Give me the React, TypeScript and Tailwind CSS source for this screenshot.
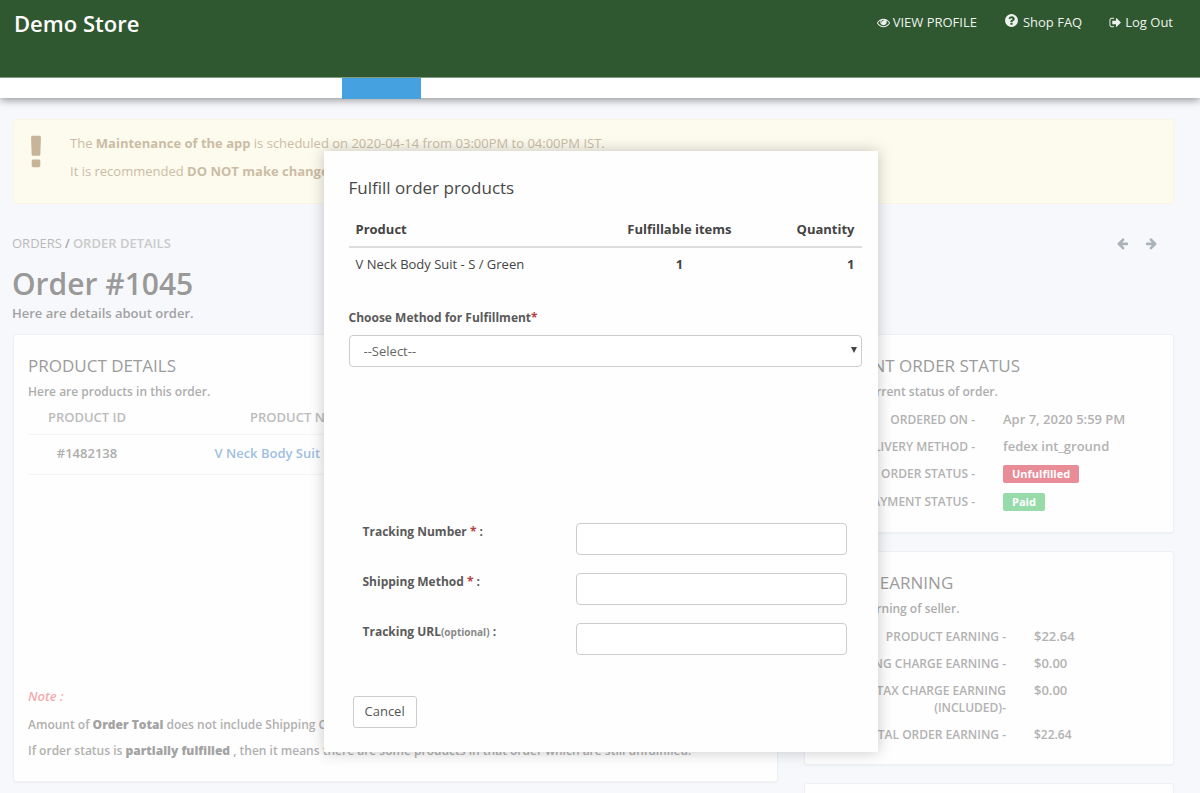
import type { ReactNode } from "react";

type IconProps = { path: string; className: string };

const ICONS = {
  eye: "M1664 960q-152-236-381-353 61 104 61 225 0 185-131.5 316.5t-316.5 131.5-316.5-131.5-131.5-316.5q0-121 61-225-229 117-381 353 133 205 333.5 326.5t434.5 121.5 434.5-121.5 333.5-326.5zm-720-384q0-20-14-34t-34-14q-125 0-214.5 89.5t-89.5 214.5q0 20 14 34t34 14 34-14 14-34q0-86 61-147t147-61q20 0 34-14t14-34zm848 384q0 34-20 69-140 230-376.5 368.5t-499.5 138.5-499.5-139-376.5-368q-20-35-20-69t20-69q140-229 376.5-368t499.5-139 499.5 139 376.5 368q20 35 20 69z",
  question:
    "M1024 1376v-192q0-14-9-23t-23-9h-192q-14 0-23 9t-9 23v192q0 14 9 23t23 9h192q14 0 23-9t9-23zm256-672q0-88-55.5-163t-138.5-116-170-41q-243 0-371 213-15 24 8 42l132 100q7 6 19 6 16 0 25-12 53-68 86-92 34-24 86-24 48 0 85.5 26t37.5 59q0 38-20 61t-68 45q-63 28-115.500 86.500t-52.500 125.500v36q0 14 9 23t23 9h192q14 0 23-9t9-23q0-19 21.500-49.500t54.500-49.500q32-18 49-28.500t46-35 44.500-48 28-60.500 12.500-81zm384 192q0 209-103 385.500t-279.500 279.500-385.500 103-385.500-103-279.500-279.500-103-385.500 103-385.500 279.500-279.500 385.500-103 385.500 103 279.500 279.500 103 385.500z",
  signOut:
    "M704 1440q0 4 1 20t.5 26.5-3 23.5-10 19.5-20.5 6.5h-320q-119 0-203.5-84.5t-84.5-203.5v-704q0-119 84.5-203.5t203.5-84.5h320q13 0 22.5 9.5t9.5 22.5q0 4 1 20t.5 26.5-3 23.5-10 19.5-20.5 6.5h-320q-66 0-113 47t-47 113v704q0 66 47 113t113 47h312l11.5 1 11.5 3 8 5.5 7 9 2 13.5zm928-544q0 26-19 45l-544 544q-19 19-45 19t-45-19-19-45v-288h-448q-26 0-45-19t-19-45v-384q0-26 19-45t45-19h448v-288q0-26 19-45t45-19 45 19l544 544q19 19 19 45z",
  exclamation:
    "M1088 1248v224q0 26-19 45t-45 19h-256q-26 0-45-19t-19-45v-224q0-26 19-45t45-19h256q26 0 45 19t19 45zm30-1056l-28 768q-1 26-20.500 45t-45.500 19h-256q-26 0-45.500-19t-20.500-45l-28-768q-1-26 17.500-45t44.500-19h320q26 0 44.500 19t17.500 45z",
  arrowLeft:
    "M1664 896v128q0 53-32.5 90.500t-84.500 37.500h-704l293 294q38 36 38 90t-38 90l-75 76q-37 37-90 37-52 0-91-37l-651-652q-37-37-37-90 0-52 37-91l651-650q38-38 91-38 52 0 90 38l75 74q38 38 38 91t-38 91l-293 293h704q52 0 84.500 37.500t32.500 90.500z",
};

function Icon({ path, className }: IconProps) {
  return (
    <svg viewBox="0 0 1792 1792" fill="currentColor" aria-hidden="true" className={className}>
      <path d={path} />
    </svg>
  );
}

function Card({ title, subtitle, children }: { title: string; subtitle: string; children: ReactNode }) {
  return (
    <section className="rounded-[3px] border border-[#eff0f3] bg-[#fefefe] px-[14px] pt-[19px] pb-[17px] shadow-[0_1px_2px_rgba(0,0,0,0.04)]">
      <h2 className="text-[17px] leading-6 text-[#9c9c9c]">{title}</h2>
      <p className="mt-1 text-[12px] leading-5 font-semibold text-[#adadad]">{subtitle}</p>
      {children}
    </section>
  );
}

type Row = { label: ReactNode; value: ReactNode };

function DetailRows({ rows, columns }: { rows: Row[]; columns: string }) {
  return (
    <dl className="mt-[9px] mb-1 flex flex-col gap-[10px]">
      {rows.map((row, i) => (
        <div key={i} className={columns}>
          <dt className="text-right text-[12px] leading-[17px] font-semibold text-[#b2b2b2]">{row.label}</dt>
          <dd className="text-[13px] leading-[17px] font-semibold text-[#b2b2b2]">{row.value}</dd>
        </div>
      ))}
    </dl>
  );
}

const statusRows: Row[] = [
  { label: "ORDERED ON -", value: "Apr 7, 2020 5:59 PM" },
  { label: "DELIVERY METHOD -", value: "fedex int_ground" },
  {
    label: "ORDER STATUS -",
    value: (
      <span className="inline-block rounded-[2px] bg-[#e88c98] px-[9px] text-[11px] leading-[18px] font-bold text-white">
        Unfulfilled
      </span>
    ),
  },
  {
    label: "PAYMENT STATUS -",
    value: (
      <span className="inline-block rounded-[2px] bg-[#97dbab] px-[9px] text-[11px] leading-[18px] font-bold text-white">
        Paid
      </span>
    ),
  },
];

const earningRows: Row[] = [
  { label: "PRODUCT EARNING -", value: "$22.64" },
  { label: "SHIPPING CHARGE EARNING -", value: "$0.00" },
  { label: "TAX CHARGE EARNING (INCLUDED)-", value: "$0.00" },
  { label: "TOTAL ORDER EARNING -", value: <span className="text-[12px]">$22.64</span> },
];

function Field({ id, children }: { id: string; children: ReactNode }) {
  return (
    <div className="grid grid-cols-[213px_1fr] items-start">
      <label htmlFor={id} className="text-[12px] leading-[18px] font-bold text-[#5a5a5a]">
        {children}
      </label>
      <input
        id={id}
        type="text"
        className="h-8 w-full rounded-[4px] border border-[#ccc] bg-white px-3 text-[13px] text-[#555]"
      />
    </div>
  );
}

function FulfillDialog() {
  return (
    <div
      role="dialog"
      aria-labelledby="fulfill-title"
      className="w-[554px] bg-[#fefefe] pt-[25px] pr-4 pb-6 pl-[25px] shadow-[0_0_14px_rgba(0,0,0,0.22)]"
    >
      <h2 id="fulfill-title" className="text-[17px] leading-6 text-[#484848]">
        Fulfill order products
      </h2>
      <table className="mt-3 w-full text-[13px] leading-[18px] text-[#444]">
        <thead>
          <tr className="border-b-2 border-[#ddd]">
            <th className="w-[45%] px-[7px] py-2 text-left font-bold">Product</th>
            <th className="px-[7px] py-2 text-center font-bold">Fulfillable items</th>
            <th className="w-[16%] px-[7px] py-2 text-right font-bold">Quantity</th>
          </tr>
        </thead>
        <tbody>
          <tr>
            <td className="px-[7px] pt-[7px] pb-2">V Neck Body Suit - S / Green</td>
            <td className="px-[7px] pt-[7px] pb-2 text-center font-bold">1</td>
            <td className="px-[7px] pt-[7px] pb-2 text-right font-bold">1</td>
          </tr>
        </tbody>
      </table>
      <div className="mt-7">
        <label htmlFor="method" className="block text-[12px] leading-[18px] font-bold text-[#5a5a5a]">
          Choose Method for Fulfillment<span className="text-[#b54040]">*</span>
        </label>
        <div className="relative mt-2">
          <select
            id="method"
            className="h-8 w-full appearance-none rounded-[4px] border border-[#ccc] bg-white px-[14px] pt-px text-[13px] text-[#666]"
          >
            <option>--Select--</option>
          </select>
          <svg
            viewBox="0 0 6 6"
            aria-hidden="true"
            className="pointer-events-none absolute top-3 right-[5px] size-[6px] fill-[#444]"
          >
            <path d="M0 0h6L3 6z" />
          </svg>
        </div>
      </div>
      <div className="mt-[156px] flex flex-col gap-[18px] pr-[15px] pl-[14px]">
        <Field id="tracking-number">
          Tracking Number <span className="text-[#b54040]">*</span> :
        </Field>
        <Field id="shipping-method">
          Shipping Method <span className="text-[#b54040]">*</span> :
        </Field>
        <Field id="tracking-url">
          Tracking URL<span className="text-[10px] text-[#888]">(optional)</span> :
        </Field>
      </div>
      <button
        type="button"
        className="mt-[41px] ml-1 h-8 rounded-[3px] border border-[#ccc] bg-white px-[11px] text-[13px] text-[#555]"
      >
        Cancel
      </button>
    </div>
  );
}

export default function App() {
  return (
    <div className="relative h-screen overflow-hidden bg-[#f7f8fc] font-['Open_Sans','Noto_Sans',sans-serif] text-[13px]">
      <div className="relative shadow-[0_2px_8px_rgba(0,0,0,0.42)]">
        <header className="flex h-[78px] items-start justify-between border-b border-[#7d997e] bg-[#2f5730] pr-[27px] pl-[14px] text-white">
          <a href="#home" className="mt-[7px] text-[22px] leading-8 font-semibold">
            Demo Store
          </a>
          <nav className="mt-3 flex gap-[27px] leading-5 text-[#eef2ee]">
            <a href="#profile" className="flex items-center gap-[3px]">
              <Icon path={ICONS.eye} className="size-[13px]" />
              VIEW PROFILE
            </a>
            <a href="#faq" className="flex items-center gap-1">
              <Icon path={ICONS.question} className="mb-[3px] size-[15px]" />
              Shop FAQ
            </a>
            <a href="#logout" className="flex items-center gap-[3px]">
              <Icon path={ICONS.signOut} className="size-[13px]" />
              Log Out
            </a>
          </nav>
        </header>
        <div className="h-5 bg-white pl-[342px]">
          <div className="h-[21px] w-[79px] bg-[#46a1e1]" />
        </div>
      </div>

      <main className="pt-[21px] pr-[26px] pl-[13px]">
        <div className="flex gap-[14px] rounded-[3px] border border-[#fdf3e2] bg-[#fdfaee] pt-[9px] pb-[18px] pl-[2px] leading-7 text-[#cbbda5]">
          <Icon path={ICONS.exclamation} className="mt-1 size-10 shrink-0 text-[#c6b598]" />
          <div>
            <p>
              The <strong>Maintenance of the app</strong> is scheduled on 2020-04-14 from 03:00PM to 04:00PM IST.
            </p>
            <p>
              It is recommended <strong>DO NOT make changes</strong>
            </p>
          </div>
        </div>

        <div className="-ml-px">
          <div className="mt-[29px] flex items-start justify-between">
            <nav aria-label="Breadcrumb" className="text-[12px] leading-5 font-semibold text-[#a2a2a2]">
              <a href="#orders" className="text-[13px] font-normal text-[#b9b9b9]">
                ORDERS
              </a>{" "}
              / <span className="text-[13px] text-[#cacaca]">ORDER DETAILS</span>
            </nav>
            <div className="flex gap-4 pt-1 pr-4 text-[#aab3ba]">
              <a href="#previous" aria-label="Previous order">
                <Icon path={ICONS.arrowLeft} className="size-[13px]" />
              </a>
              <a href="#next" aria-label="Next order">
                <Icon path={ICONS.arrowLeft} className="size-[13px] -scale-x-100" />
              </a>
            </div>
          </div>
          <h1 className="mt-[10px] text-[30px] leading-10 font-semibold text-[#999]">Order #1045</h1>
          <p className="leading-[18px] font-semibold text-[#a2a2a2]">Here are details about order.</p>
        </div>

        <div className="mt-3 grid grid-cols-[1fr_370px] items-start gap-[26px]">
          <Card title="PRODUCT DETAILS" subtitle="Here are products in this order.">
            <table className="w-7/12 table-fixed text-center font-semibold">
              <thead>
                <tr className="h-8 border-b border-[#f4f4f4] text-[#bcbcbc]">
                  <th className="w-[118px] font-semibold">PRODUCT ID</th>
                  <th className="font-semibold">PRODUCT NAME</th>
                </tr>
              </thead>
              <tbody>
                <tr className="h-10 border-b border-[#f4f4f4]">
                  <td className="text-[#adadad]">#1482138</td>
                  <td>
                    <a href="#product" className="text-[#9fbfe0]">
                      V Neck Body Suit - S / Green
                    </a>
                  </td>
                </tr>
              </tbody>
            </table>
            <div className="mt-[208px] text-[12px] leading-[26px] font-semibold text-[#b0b0b0]">
              <p className="mb-[3px] text-[13px] text-[#f5aab0] italic">Note :</p>
              <p>
                Amount of <strong className="text-[#a3a3a3]">Order Total</strong> does not include Shipping Charge.
              </p>
              <p>
                If order status is <strong className="text-[#a3a3a3]">partially fulfilled</strong> , then it means
                there are some products in that order which are still unfulfilled.
              </p>
            </div>
          </Card>

          <div className="flex flex-col gap-[18px]">
            <Card title="CURRENT ORDER STATUS" subtitle="Here is current status of order.">
              <DetailRows rows={statusRows} columns="grid grid-cols-[156px_1fr] gap-7" />
            </Card>
            <Card title="SELLER EARNING" subtitle="Here is earning of seller.">
              <DetailRows rows={earningRows} columns="grid grid-cols-[187px_1fr] gap-7" />
            </Card>
            <section className="h-40 rounded-[3px] border border-[#eff0f3] bg-[#fefefe]" />
          </div>
        </div>
      </main>

      <div className="absolute inset-x-0 top-[151px] flex justify-center pl-px">
        <FulfillDialog />
      </div>
    </div>
  );
}
